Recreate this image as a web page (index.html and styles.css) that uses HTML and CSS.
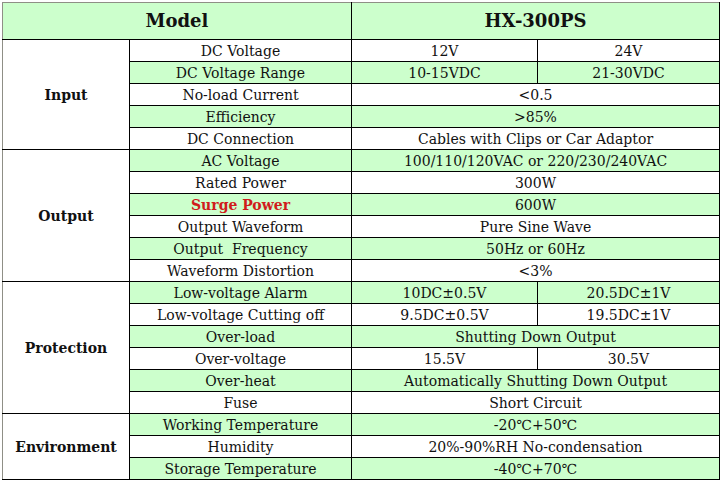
FILE: index.html
```html
<!DOCTYPE html>
<html>
<head>
<meta charset="utf-8">
<link rel="stylesheet" href="styles.css">
</head>
<body>
<div class="sheet">
<table class="spec">
  <colgroup>
    <col class="c1"><col class="c2"><col class="c3"><col class="c4">
  </colgroup>
  <tr class="head">
    <th colspan="2">Model</th>
    <th colspan="2">HX-300PS</th>
  </tr>
  <tr>
    <td class="group" rowspan="5">Input</td>
    <td>DC Voltage</td><td>12V</td><td>24V</td>
  </tr>
  <tr class="g"><td>DC Voltage Range</td><td>10-15VDC</td><td>21-30VDC</td></tr>
  <tr><td>No-load Current</td><td colspan="2">&lt;0.5</td></tr>
  <tr class="g"><td>Efficiency</td><td colspan="2">&gt;85%</td></tr>
  <tr><td>DC Connection</td><td colspan="2">Cables with Clips or Car Adaptor</td></tr>
  <tr class="g">
    <td class="group" rowspan="6">Output</td>
    <td>AC Voltage</td><td colspan="2">100/110/120VAC or 220/230/240VAC</td>
  </tr>
  <tr><td>Rated Power</td><td colspan="2">300W</td></tr>
  <tr class="g"><td class="hot">Surge Power</td><td colspan="2">600W</td></tr>
  <tr><td>Output Waveform</td><td colspan="2">Pure Sine Wave</td></tr>
  <tr class="g"><td>Output&nbsp; Frequency</td><td colspan="2">50Hz or 60Hz</td></tr>
  <tr><td>Waveform Distortion</td><td colspan="2">&lt;3%</td></tr>
  <tr class="g">
    <td class="group" rowspan="6">Protection</td>
    <td>Low-voltage Alarm</td><td>10DC±0.5V</td><td>20.5DC±1V</td>
  </tr>
  <tr><td>Low-voltage Cutting off</td><td>9.5DC±0.5V</td><td>19.5DC±1V</td></tr>
  <tr class="g"><td>Over-load</td><td colspan="2">Shutting Down Output</td></tr>
  <tr><td>Over-voltage</td><td>15.5V</td><td>30.5V</td></tr>
  <tr class="g"><td>Over-heat</td><td colspan="2">Automatically Shutting Down Output</td></tr>
  <tr><td>Fuse</td><td colspan="2">Short Circuit</td></tr>
  <tr class="g">
    <td class="group" rowspan="3">Environment</td>
    <td>Working Temperature</td><td colspan="2">-20℃+50℃</td>
  </tr>
  <tr><td>Humidity</td><td colspan="2">20%-90%RH No-condensation</td></tr>
  <tr class="g"><td>Storage Temperature</td><td colspan="2">-40℃+70℃</td></tr>
</table>
</div>
</body>
</html>
```
FILE: styles.css
```css
html, body {
  margin: 0;
  padding: 0;
  background: #ffffff;
}
.sheet {
  padding: 2px 0 0 2px;
  width: 721px;
  height: 482px;
  box-sizing: border-box;
  overflow: hidden;
}
.spec {
  border-collapse: collapse;
  table-layout: fixed;
  width: 717px;
  font-family: "DejaVu Serif", "Liberation Serif", serif;
  font-size: 14px;
  color: #111;
}
.c1 { width: 127px; }
.c2 { width: 222px; }
.c3 { width: 186px; }
.c4 { width: 182px; }
.spec td, .spec th {
  border: 1px solid #000;
  text-align: center;
  padding: 1px 0 0 0;
  height: 20px;
  line-height: 20px;
  white-space: nowrap;
}
.spec tr.head th {
  background: #ccffcc;
  font-size: 18px;
  font-weight: bold;
  height: 36px;
  line-height: 36px;
  padding: 0;
  border-top: 1px solid #8f8f86;
}
.spec tr.head th:first-child {
  border-left: 1px solid #8f8f86;
}
.spec tr.g td {
  background: #ccffcc;
}
.spec tr.g td.group, .spec td.group {
  background: #ffffff;
  font-weight: bold;
  border-left: 1px solid #8f8f86;
}
.spec td.hot {
  color: #d01c1c;
  font-weight: bold;
}
```
